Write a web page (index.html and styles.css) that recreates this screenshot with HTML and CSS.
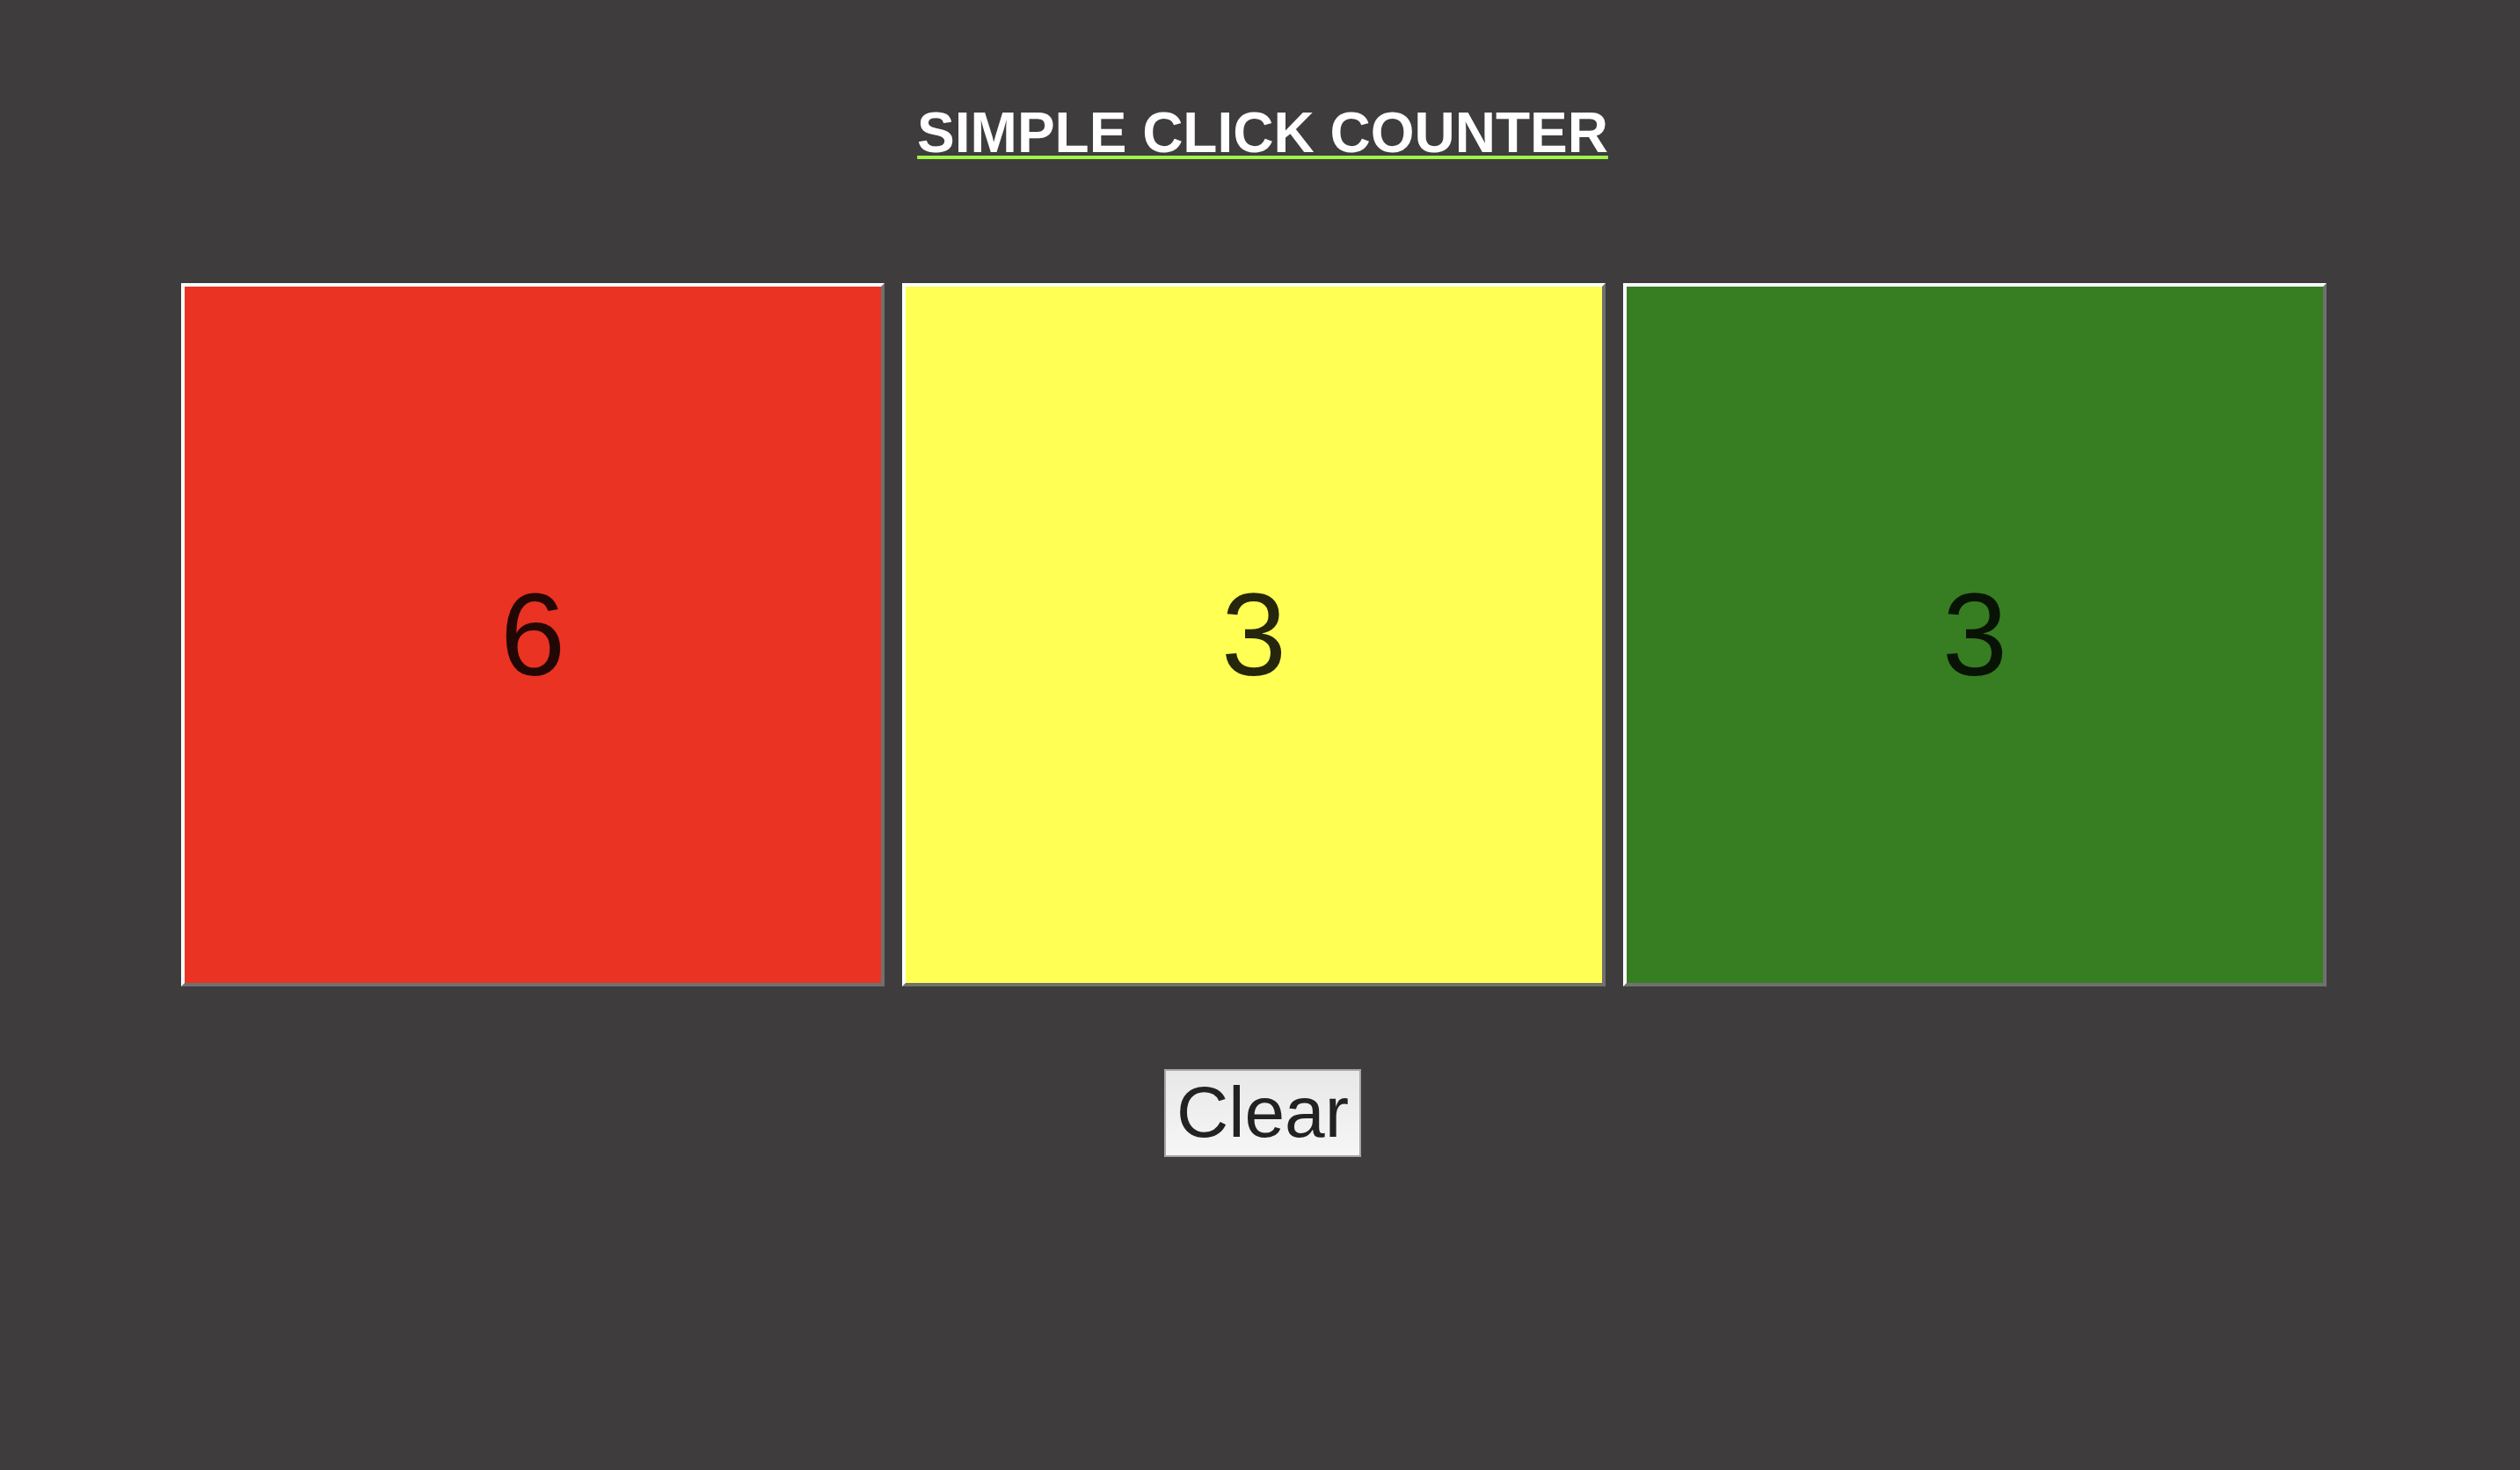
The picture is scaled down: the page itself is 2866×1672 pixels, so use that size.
FILE: index.html
```html
<!DOCTYPE html>
<html>
<head>
<meta charset="utf-8">
<title>Simple Click Counter</title>
<link rel="stylesheet" href="styles.css">
</head>
<body>
<header class="header">
  <h1 class="title">SIMPLE CLICK COUNTER</h1>
</header>
<main class="boxes">
  <div class="box box-red">6</div>
  <div class="box box-yellow">3</div>
  <div class="box box-green">3</div>
</main>
<div class="actions">
  <button class="clear">Clear</button>
</div>
</body>
</html>
```
FILE: styles.css
```css
html, body {
  margin: 0;
  padding: 0;
}
body {
  background: #3e3c3d;
  font-family: "Liberation Sans", Arial, sans-serif;
  width: 2866px;
  height: 1672px;
  overflow: hidden;
}
.header {
  display: flex;
  justify-content: center;
  padding: 119px 0 0 6px;
}
.title {
  margin: 0;
  font-size: 64px;
  line-height: 64px;
  font-weight: bold;
  color: #ffffff;
  text-decoration: underline;
  text-decoration-color: #9ef54a;
  text-decoration-thickness: 4px;
  text-underline-offset: 4px;
}
.boxes {
  display: flex;
  gap: 20px;
  padding-left: 206px;
  margin-top: 139px;
}
.box {
  box-sizing: border-box;
  width: 800px;
  height: 800px;
  border: 4px solid;
  border-color: #ffffff #707070 #707070 #ffffff;
  display: flex;
  align-items: center;
  justify-content: center;
  font-size: 133px;
  line-height: 1;
  color: rgba(0, 0, 0, 0.85);
}
.box-red { background: #ea3323; }
.box-yellow { background: #ffff54; }
.box-green { background: #377d22; }
.actions {
  display: flex;
  justify-content: center;
  padding-left: 6px;
  margin-top: 94px;
}
.clear {
  box-sizing: border-box;
  width: 224px;
  height: 100px;
  border: 2px solid #a6a6a6;
  border-radius: 0;
  background: linear-gradient(#e8e8e8, #f6f6f6);
  font-family: "Liberation Sans", Arial, sans-serif;
  font-size: 82px;
  line-height: 82px;
  color: #222222;
  padding: 0 0 3px 0;
  display: flex;
  align-items: center;
  justify-content: center;
}
```
